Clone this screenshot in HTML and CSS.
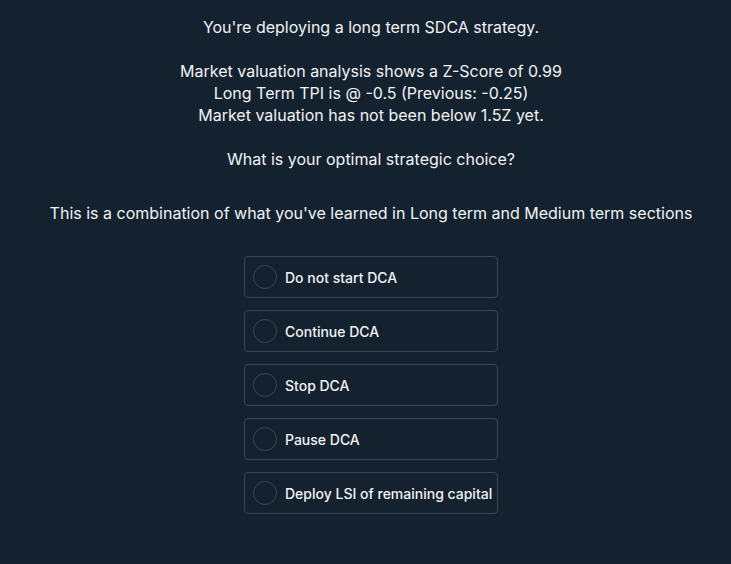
FILE: index.html
```html
<!DOCTYPE html>
<html>
<head>
<meta charset="utf-8">
<link rel="stylesheet" href="styles.css">
</head>
<body>
<div class="page">
  <div class="question">
    <p>You're deploying a long term SDCA strategy.</p>
    <p>Market valuation analysis shows a Z-Score of 0.99<br>Long Term TPI is @ -0.5 (Previous: -0.25)<br>Market valuation has not been below 1.5Z yet.</p>
    <p>What is your optimal strategic choice?</p>
    <p class="hint">This is a combination of what you've learned in Long term and Medium term sections</p>
  </div>
  <div class="options">
    <div class="option"><span class="radio"></span><span class="label">Do not start DCA</span></div>
    <div class="option"><span class="radio"></span><span class="label">Continue DCA</span></div>
    <div class="option"><span class="radio"></span><span class="label">Stop DCA</span></div>
    <div class="option"><span class="radio"></span><span class="label">Pause DCA</span></div>
    <div class="option"><span class="radio"></span><span class="label">Deploy LSI of remaining capital</span></div>
  </div>
</div>
</body>
</html>
```
FILE: styles.css
```css
html, body {
  margin: 0;
  padding: 0;
  background: #14222f;
  height: 100%;
}
body {
  font-family: Inter, "Noto Sans", sans-serif;
  color: #f1f3f5;
}
.page {
  padding-top: 16px;
  padding-left: 11px;
  display: flex;
  flex-direction: column;
  align-items: center;
}
.question {
  text-align: center;
  font-size: 16px;
  line-height: 22px;
}
.question p {
  margin: 0 0 22px 0;
}
.question p.hint {
  margin-top: 32px;
  margin-bottom: 32px;
}
.options {
  display: flex;
  flex-direction: column;
  gap: 12px;
  width: 254px;
}
.option {
  box-sizing: border-box;
  height: 42px;
  border: 1px solid #3a4753;
  border-radius: 4px;
  display: flex;
  align-items: center;
  padding-left: 8px;
  gap: 8px;
}
.radio {
  box-sizing: border-box;
  width: 24px;
  height: 24px;
  border: 1px solid #3a4855;
  border-radius: 50%;
  flex: none;
}
.label {
  font-size: 14px;
  font-weight: 500;
  color: #f1f3f5;
}
```
